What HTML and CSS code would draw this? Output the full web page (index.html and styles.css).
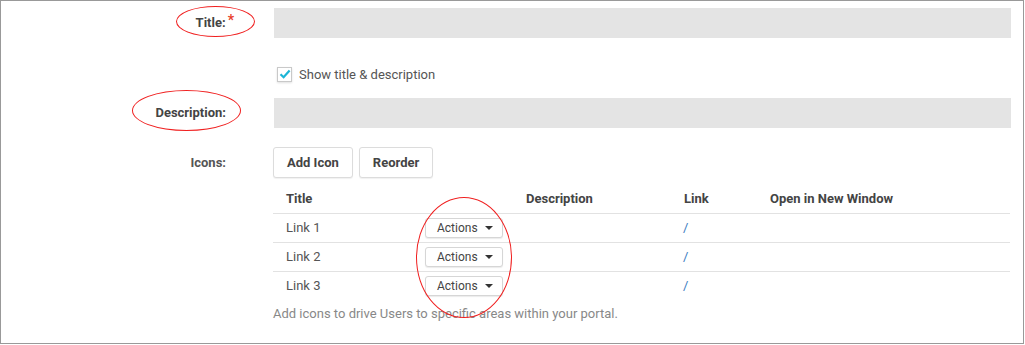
FILE: index.html
```html
<!DOCTYPE html>
<html>
<head>
    <title>Icons widget</title>
    <link rel="stylesheet" href="styles.css">
</head>
<body>
<div class="frame">
    <div class="row row-title">
        <label class="lbl">Title:<span class="req">*</span></label>
        <div class="field"><input type="text" class="txt"></div>
    </div>

    <div class="row row-check">
        <div class="lbl"></div>
        <div class="field">
            <label class="check">
                <span class="box">
                    <svg width="12" height="12" viewBox="0 0 12 12"><path d="M1.5 6.2 L4.6 9.2 L10.6 2.4" fill="none" stroke="#1cb5d6" stroke-width="2.2"/></svg>
                </span>
                Show title &amp; description
            </label>
        </div>
    </div>

    <div class="row row-desc">
        <label class="lbl">Description:</label>
        <div class="field"><input type="text" class="txt"></div>
    </div>

    <div class="row row-icons">
        <label class="lbl lbl-icons">Icons:</label>
        <div class="field">
            <div class="btns">
                <button type="button" class="btn">Add Icon</button>
                <button type="button" class="btn">Reorder</button>
            </div>
            <table class="links">
                <colgroup>
                    <col style="width: 152px">
                    <col style="width: 101px">
                    <col style="width: 158px">
                    <col style="width: 86px">
                    <col>
                </colgroup>
                <thead>
                    <tr><th>Title</th><th></th><th>Description</th><th>Link</th><th>Open in New Window</th></tr>
                </thead>
                <tbody>
                    <tr><td>Link 1</td><td><button type="button" class="act">Actions <span class="caret"></span></button></td><td></td><td><a href="#">/</a></td><td></td></tr>
                    <tr><td>Link 2</td><td><button type="button" class="act">Actions <span class="caret"></span></button></td><td></td><td><a href="#">/</a></td><td></td></tr>
                    <tr><td>Link 3</td><td><button type="button" class="act">Actions <span class="caret"></span></button></td><td></td><td><a href="#">/</a></td><td></td></tr>
                </tbody>
            </table>
            <p class="help">Add icons to drive Users to specific areas within your portal.</p>
        </div>
    </div>

    <div class="mark mark-title"></div>
    <div class="mark mark-desc"></div>
    <div class="mark mark-actions"></div>
</div>
</body>
</html>
```

FILE: styles.css
```css
body {
    margin: 0;
    font-family: Roboto, "Liberation Sans", sans-serif;
    color: #555;
}

.frame {
    position: relative;
    box-sizing: border-box;
    width: 1024px;
    height: 344px;
    border: 1px solid #999;
    padding-top: 7px;
    background: #fff;
}

.row {
    display: flex;
    align-items: center;
}

.lbl {
    width: 225px;
    flex: none;
    text-align: right;
    font-size: 13px;
    line-height: 16px;
    font-weight: bold;
    color: #444;
}

.req {
    color: #e8412c;
    font-size: 14px;
    line-height: 0;
    vertical-align: 2px;
    margin-left: 2px;
    margin-right: -8px;
}

.field {
    margin-left: 48px;
    width: 737px;
}

.txt {
    display: block;
    box-sizing: border-box;
    width: 100%;
    height: 30px;
    border: 0;
    background: #e4e4e4;
}

.row-check {
    height: 30px;
    margin-top: 21px;
}

.row-desc {
    margin-top: 9px;
}

.check {
    display: flex;
    align-items: center;
    font-size: 13px;
    color: #555;
    margin-left: 3px;
}

.box {
    box-sizing: border-box;
    width: 15px;
    height: 15px;
    border: 1px solid #c9c9c9;
    box-shadow: 0 1px 2px rgba(0, 0, 0, 0.12);
    display: flex;
    align-items: center;
    justify-content: center;
    margin-right: 7px;
}

.row-icons {
    align-items: flex-start;
    margin-top: 19px;
}

.lbl-icons {
    line-height: 31px;
    color: #555;
}

.btns {
    display: flex;
    gap: 6px;
    margin-left: -1px;
}

.btn {
    height: 31px;
    padding: 0 13px;
    background: #fff;
    border: 1px solid #dcdcdc;
    border-radius: 3px;
    box-shadow: 0 1px 1px rgba(0, 0, 0, 0.06);
    font-family: Roboto, "Liberation Sans", sans-serif;
    font-size: 13px;
    font-weight: bold;
    color: #444;
}

.links {
    width: 737px;
    margin-left: -1px;
    border-collapse: collapse;
    table-layout: fixed;
    font-size: 13px;
}

.links th {
    height: 35px;
    box-sizing: border-box;
    vertical-align: bottom;
    padding: 0 0 6px 0;
    text-align: left;
    font-weight: bold;
    color: #444;
    line-height: 16px;
}

.links td {
    height: 29px;
    box-sizing: border-box;
    padding: 0;
    border-top: 1px solid #e2e2e2;
    line-height: 16px;
    vertical-align: middle;
}

.links th:first-child,
.links td:first-child {
    padding-left: 13px;
}

.links a {
    color: #3a7cc0;
    text-decoration: none;
    margin-left: -1px;
}

.act {
    display: flex;
    align-items: center;
    box-sizing: border-box;
    width: 78px;
    height: 20px;
    padding: 0 0 0 11px;
    background: #fff;
    border: 1px solid #d6d6d6;
    border-radius: 3px;
    box-shadow: 0 1px 1px rgba(0, 0, 0, 0.08);
    font-family: Roboto, "Liberation Sans", sans-serif;
    font-size: 12px;
    color: #444;
}

.caret {
    display: inline-block;
    width: 0;
    height: 0;
    margin-left: 7px;
    border-left: 4px solid transparent;
    border-right: 4px solid transparent;
    border-top: 4px solid #333;
}

.help {
    margin: 6px 0 0 -1px;
    font-size: 13px;
    line-height: 16px;
    color: #888;
}

.mark {
    position: absolute;
    border: 1px solid #f02020;
    border-radius: 50%;
}

.mark-title {
    left: 175px;
    top: 5px;
    width: 77px;
    height: 29px;
}

.mark-desc {
    left: 131px;
    top: 89px;
    width: 107px;
    height: 39px;
}

.mark-actions {
    left: 415px;
    top: 196px;
    width: 94px;
    height: 119px;
}
```
